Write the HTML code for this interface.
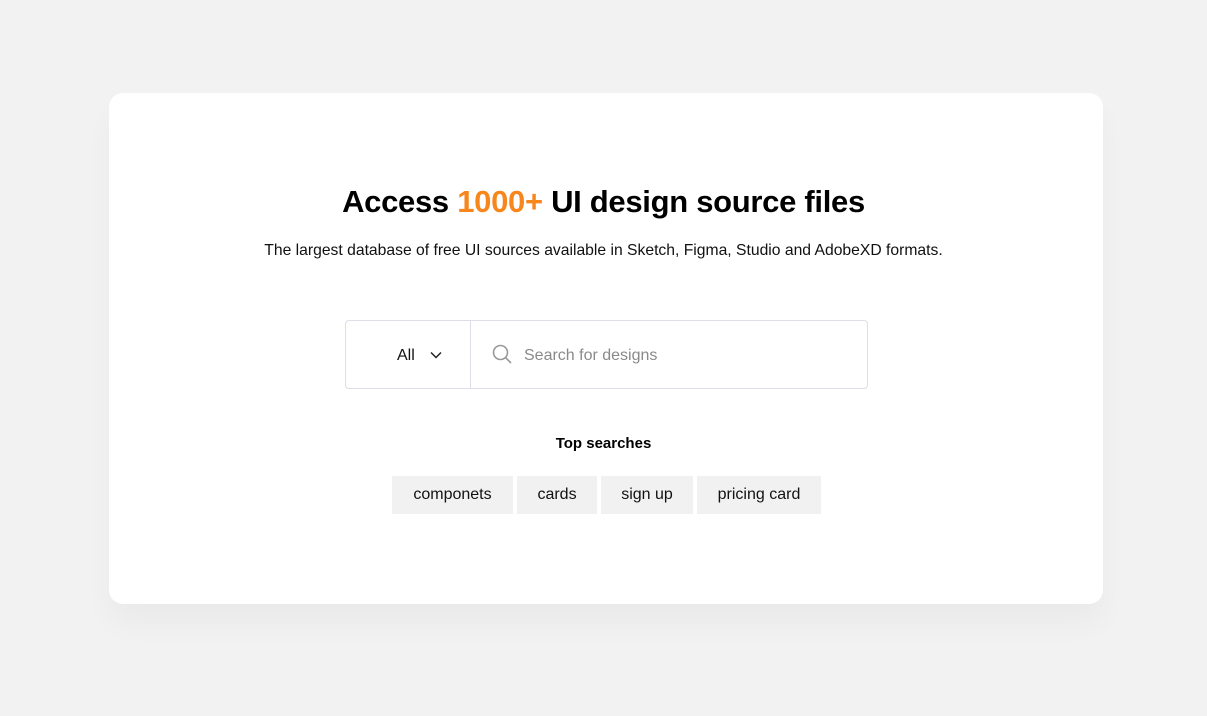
<!DOCTYPE html><html><head><style>
body{margin:0;width:1207px;height:716px;background:#f2f2f2;font-family:"Liberation Sans",Arial,sans-serif;position:relative;overflow:hidden}
.card{position:absolute;left:109px;top:93px;width:994px;height:511px;background:#fff;border-radius:14px;box-shadow:0 20px 30px rgba(0,0,0,0.035)}
h1{position:absolute;top:182px;left:0;width:1207px;text-align:center;margin:0;font-size:31px;font-weight:bold;color:#000;line-height:40px;letter-spacing:-0.3px}
h1 span{color:#f7861c}
.sub{position:absolute;top:241px;left:0;width:1207px;text-align:center;font-size:15.7px;color:#111;line-height:20px}
.search{position:absolute;left:345px;top:320px;width:521px;height:67px;border:1px solid #dedde9;border-radius:4px;background:#fff}
.div{position:absolute;left:124px;top:0;width:1px;height:67px;background:#dedde9}
.all{position:absolute;left:51px;top:26px;font-size:16px;color:#111}
.ph{position:absolute;left:178px;top:26px;font-size:16px;color:#8a8a8a}
.top{position:absolute;top:435px;left:0;width:1207px;text-align:center;font-size:15px;font-weight:bold;color:#000}
.tag{position:absolute;top:476px;height:38px;background:#f1f1f1;font-size:16px;line-height:38px;text-align:center;color:#111}
</style></head><body>
<div class="card"></div>
<h1>Access <span>1000+</span> UI design source files</h1>
<div class="sub">The largest database of free UI sources available in Sketch, Figma, Studio and AdobeXD formats.</div>
<div class="search">
<span class="all">All</span>
<svg style="position:absolute;left:84px;top:30px" width="12" height="8" viewBox="0 0 12 8"><path d="M1 1.5l5 5 5-5" fill="none" stroke="#222" stroke-width="1.5"/></svg>
<div class="div"></div>
<svg style="position:absolute;left:146px;top:23px" width="22" height="22" viewBox="0 0 22 22"><circle cx="8.5" cy="8.5" r="7" fill="none" stroke="#999" stroke-width="1.6"/><path d="M13.5 13.5l5.5 5.5" stroke="#999" stroke-width="1.6"/></svg>
<span class="ph">Search for designs</span>
</div>
<div class="top">Top searches</div>
<div class="tag" style="left:392px;width:121px">componets</div>
<div class="tag" style="left:517px;width:80px">cards</div>
<div class="tag" style="left:601px;width:92px">sign up</div>
<div class="tag" style="left:697px;width:124px">pricing card</div>
</body></html>
